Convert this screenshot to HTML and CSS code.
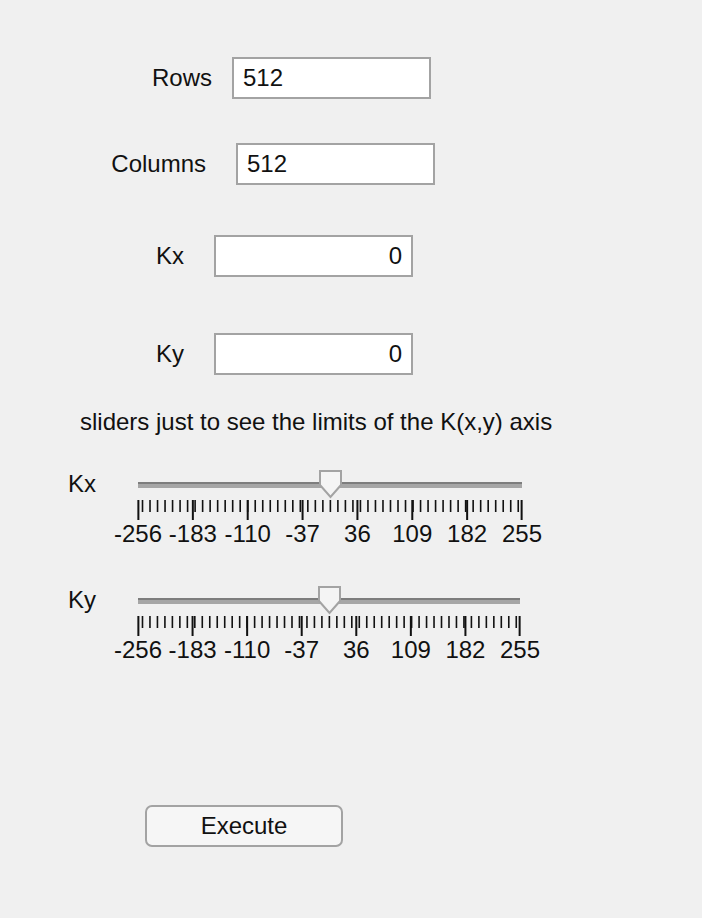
FILE: index.html
```html
<!DOCTYPE html>
<html>
<head>
<meta charset="utf-8">
<link rel="stylesheet" href="styles.css">
</head>
<body>
<div class="app">
  <div class="field-row row-rows">
    <label class="lbl lbl-rows">Rows</label>
    <div class="edit">512</div>
  </div>
  <div class="field-row row-cols">
    <label class="lbl lbl-cols">Columns</label>
    <div class="edit">512</div>
  </div>
  <div class="field-row row-kx">
    <label class="lbl lbl-k">Kx</label>
    <div class="edit num">0</div>
  </div>
  <div class="field-row row-ky">
    <label class="lbl lbl-k">Ky</label>
    <div class="edit num">0</div>
  </div>

  <p class="note">sliders just to see the limits of the K(x,y) axis</p>

  <div class="slider-row slider-kx">
    <div class="slider-label">Kx</div>
    <div class="slider" style="width:384px">
      <div class="rail"><div class="track"></div>
        <svg class="thumb" width="24" height="29" viewBox="0 0 24 29"><polygon points="1,1 22,1 22,15 11.5,27 1,15" /></svg>
      </div>
      <svg class="ticks" width="384" height="20" viewBox="0 0 511 20" preserveAspectRatio="none">
        <path class="minor" d="M6 0V12M16 0V12M26 0V12M36 0V12M46 0V12M56 0V12M66 0V12M76 0V12M86 0V12M96 0V12M106 0V12M116 0V12M126 0V12M136 0V12M146 0V12M156 0V12M166 0V12M176 0V12M186 0V12M196 0V12M206 0V12M216 0V12M226 0V12M236 0V12M246 0V12M256 0V12M266 0V12M276 0V12M286 0V12M296 0V12M306 0V12M316 0V12M326 0V12M336 0V12M346 0V12M356 0V12M366 0V12M376 0V12M386 0V12M396 0V12M406 0V12M416 0V12M426 0V12M436 0V12M446 0V12M456 0V12M466 0V12M476 0V12M486 0V12M496 0V12M506 0V12"/>
        <path class="major" d="M0.5 0V20M73 0V20M146 0V20M219 0V20M292 0V20M365 0V20M438 0V20M510.5 0V20"/>
      </svg>
      <div class="tick-labels">
        <span style="left:0%">-256</span>
        <span style="left:14.286%">-183</span>
        <span style="left:28.571%">-110</span>
        <span style="left:42.857%">-37</span>
        <span style="left:57.143%">36</span>
        <span style="left:71.429%">109</span>
        <span style="left:85.714%">182</span>
        <span style="left:100%">255</span>
      </div>
    </div>
  </div>

  <div class="slider-row slider-ky">
    <div class="slider-label">Ky</div>
    <div class="slider" style="width:382px">
      <div class="rail"><div class="track"></div>
        <svg class="thumb" width="24" height="29" viewBox="0 0 24 29"><polygon points="1,1 22,1 22,15 11.5,27 1,15" /></svg>
      </div>
      <svg class="ticks" width="382" height="20" viewBox="0 0 511 20" preserveAspectRatio="none">
        <path class="minor" d="M6 0V12M16 0V12M26 0V12M36 0V12M46 0V12M56 0V12M66 0V12M76 0V12M86 0V12M96 0V12M106 0V12M116 0V12M126 0V12M136 0V12M146 0V12M156 0V12M166 0V12M176 0V12M186 0V12M196 0V12M206 0V12M216 0V12M226 0V12M236 0V12M246 0V12M256 0V12M266 0V12M276 0V12M286 0V12M296 0V12M306 0V12M316 0V12M326 0V12M336 0V12M346 0V12M356 0V12M366 0V12M376 0V12M386 0V12M396 0V12M406 0V12M416 0V12M426 0V12M436 0V12M446 0V12M456 0V12M466 0V12M476 0V12M486 0V12M496 0V12M506 0V12"/>
        <path class="major" d="M0.5 0V20M73 0V20M146 0V20M219 0V20M292 0V20M365 0V20M438 0V20M510.5 0V20"/>
      </svg>
      <div class="tick-labels">
        <span style="left:0%">-256</span>
        <span style="left:14.286%">-183</span>
        <span style="left:28.571%">-110</span>
        <span style="left:42.857%">-37</span>
        <span style="left:57.143%">36</span>
        <span style="left:71.429%">109</span>
        <span style="left:85.714%">182</span>
        <span style="left:100%">255</span>
      </div>
    </div>
  </div>

  <button class="btn" type="button">Execute</button>
</div>
</body>
</html>
```
FILE: styles.css
```css
html, body {
  margin: 0;
  padding: 0;
  background: #f0f0f0;
}
body {
  font-family: "Liberation Sans", Arial, Helvetica, sans-serif;
  font-size: 24px;
  color: #111;
  width: 702px;
  height: 918px;
  overflow: hidden;
}
.app {
  display: flex;
  flex-direction: column;
  align-items: flex-start;
}
.field-row {
  display: flex;
  align-items: center;
  height: 42px;
}
.lbl {
  text-align: right;
  line-height: 28px;
}
.row-rows { margin-top: 57px; gap: 20px; }
.row-rows .lbl { width: 212px; }
.row-cols { margin-top: 44px; gap: 30px; }
.row-cols .lbl { width: 206px; }
.row-kx { margin-top: 50px; gap: 30px; }
.row-ky { margin-top: 56px; gap: 30px; }
.lbl-k { width: 184px; }
.edit {
  box-sizing: border-box;
  width: 199px;
  height: 42px;
  border: 2px solid #a3a3a3;
  background: #fff;
  padding: 0 9px;
  line-height: 38px;
}
.edit.num { text-align: right; }
.note {
  margin: 33px 0 0 80px;
  line-height: 28px;
}
.slider-row {
  display: flex;
  align-items: flex-start;
}
.slider-kx { margin-top: 34px; }
.slider-ky { margin-top: 38px; }
.slider-label {
  width: 70px;
  padding-left: 68px;
  line-height: 28px;
}
.slider {
  display: flex;
  flex-direction: column;
}
.rail {
  position: relative;
  height: 30px;
}
.track {
  box-sizing: border-box;
  margin-top: 12px;
  height: 6px;
  border-top: 2px solid #7d7d7d;
  background: #a6a6a6;
}
.thumb {
  position: absolute;
  left: 50%;
  top: 0;
  margin-left: -11.5px;
  overflow: visible;
}
.thumb polygon {
  fill: #f4f4f4;
  stroke: #a3a3a3;
  stroke-width: 2;
  stroke-linejoin: miter;
}
.ticks {
  display: block;
  overflow: visible;
}
.ticks path {
  stroke: #111;
  fill: none;
  vector-effect: non-scaling-stroke;
}
.ticks .minor { stroke-width: 1.6; }
.ticks .major { stroke-width: 2; }
.tick-labels {
  position: relative;
  height: 28px;
  line-height: 28px;
}
.tick-labels span {
  position: absolute;
  top: 0;
  transform: translateX(-50%);
  white-space: nowrap;
}
.btn {
  margin: 141px 0 0 145px;
  box-sizing: border-box;
  width: 198px;
  height: 42px;
  border: 2px solid #a3a3a3;
  border-radius: 7px;
  background: #f6f6f6;
  font-family: inherit;
  font-size: 24px;
  color: #111;
  padding: 0;
  line-height: 38px;
}
```
